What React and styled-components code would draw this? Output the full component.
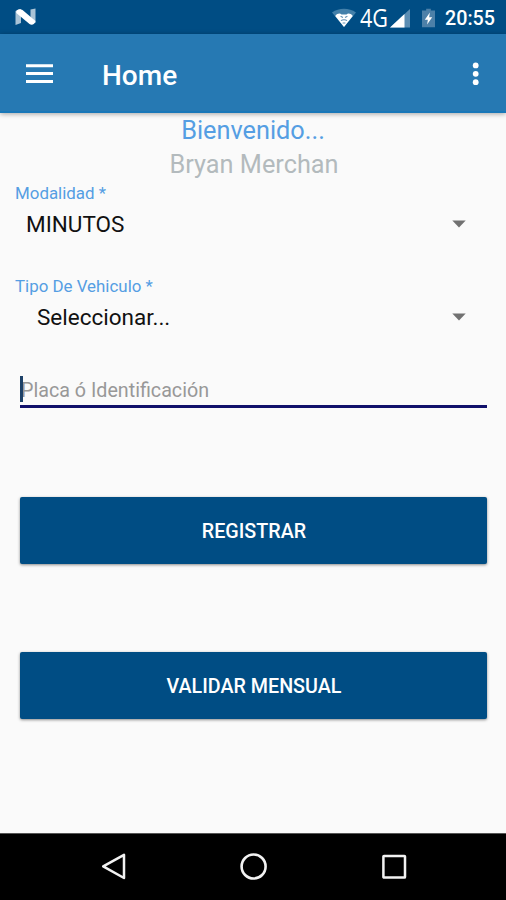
import React from "react"
import styled, { createGlobalStyle } from "styled-components"

const GlobalStyle = createGlobalStyle`
  * {
    box-sizing: border-box;
  }
  body {
    margin: 0;
    background: #fafafa;
    font-family: Roboto, "Noto Sans", sans-serif;
  }
  button {
    font-family: inherit;
  }
`

const StatusBar = () => (
  <Status>
    <svg width="22" height="18" viewBox="0 0 22 18">
      <path d="M0.5 3 L6 1 V15 L0.5 17 Z" fill="#a9c3d6" />
      <path d="M15.5 1.5 L20.5 0.5 V15 L15.5 12 Z" fill="#a9c3d6" />
      <path
        d="M1.3 3 C2.5 1 5.5 .5 7.5 2 L20.5 13 C20 16.5 16.5 17.5 14.5 16 L1.3 5 Z"
        fill="#fff"
      />
    </svg>
    <StatusIcons>
      <WifiIcon />
      <Network>4G</Network>
      <SignalIcon />
      <BatteryIcon />
      <Clock>20:55</Clock>
    </StatusIcons>
  </Status>
)

const WifiIcon = () => (
  <svg width="24" height="20" viewBox="0 0 24 20">
    <path d="M0 4.5 C7 -0.5 17 -0.5 24 4.5 L12 19 Z" fill="#4380aa" />
    <path
      d="M3.2 8 C5.5 5.2 8 5 9.5 6.5 H14.5 C16 5 18.5 5.2 20.8 8 L12 19 Z"
      fill="#fff"
    />
    <path
      d="M8.6 8.2 L11 9.4 M15.4 8.2 L13 9.4 M9 12.6 C10.5 11.4 13.5 11.4 15 12.6 M10.6 15 H13.4"
      stroke="#5f8fb3"
      strokeWidth="1.1"
      fill="none"
    />
  </svg>
)

const SignalIcon = () => (
  <svg width="20" height="19" viewBox="0 0 20 19">
    <path d="M0 18.5 L20 0 V18.5 Z" fill="#5b8db3" />
    <path d="M0 18.5 L14.5 5 V18.5 Z" fill="#fff" />
  </svg>
)

const BatteryIcon = () => (
  <Battery width="13" height="20" viewBox="0 0 14 20">
    <path d="M4.5 0 H9.5 V2 H14 V20 H0 V2 H4.5 Z" fill="#4d80a8" />
    <path d="M8.5 4 L3 12 H6.3 L5.5 17 L11 9.3 H7.7 Z" fill="#fff" />
  </Battery>
)

const Select = ({ label, value, indent }) => (
  <Field>
    <Label>{label}</Label>
    <Value $indent={indent}>
      {value}
      <svg width="14" height="8" viewBox="0 0 14 8">
        <path d="M0.3 0.5 H13.7 L7 7.5 Z" fill="#717171" />
      </svg>
    </Value>
  </Field>
)

const NavigationBar = () => (
  <Navigation>
    <svg width="26" height="28" viewBox="0 0 26 28">
      <path
        d="M23 2.8 V26 L2.2 14.4 Z"
        fill="none"
        stroke="#f2f2f2"
        strokeWidth="2.5"
        strokeLinejoin="round"
      />
    </svg>
    <svg width="28" height="28" viewBox="0 0 28 28">
      <circle
        cx="13.6"
        cy="14.5"
        r="12"
        fill="none"
        stroke="#f2f2f2"
        strokeWidth="2.6"
      />
    </svg>
    <svg width="26" height="28" viewBox="0 0 26 28">
      <rect
        x="2.4"
        y="4"
        width="21.6"
        height="21.6"
        rx="0.6"
        fill="none"
        stroke="#f2f2f2"
        strokeWidth="2.5"
      />
    </svg>
  </Navigation>
)

const App = () => (
  <Screen>
    <GlobalStyle />
    <StatusBar />
    <Toolbar>
      <svg width="27" height="20" viewBox="0 0 27 20">
        <path d="M0 1.8 H27 M0 9.6 H27 M0 17.4 H27" stroke="#fff" strokeWidth="3" />
      </svg>
      <Title>Home</Title>
      <svg width="8" height="24" viewBox="0 0 8 24">
        <circle cx="3.7" cy="3.4" r="2.9" fill="#fff" />
        <circle cx="3.7" cy="11.8" r="2.9" fill="#fff" />
        <circle cx="3.7" cy="20.2" r="2.9" fill="#fff" />
      </svg>
    </Toolbar>
    <Content>
      <Greeting color="#559ee3">Bienvenido...</Greeting>
      <Greeting color="#b3babd" $shift={1}>
        Bryan Merchan
      </Greeting>
      <Select label="Modalidad *" value="MINUTOS" indent={26} />
      <Select label="Tipo De Vehiculo *" value="Seleccionar..." indent={37} />
      <PlateInput>
        <Caret />
        Placa ó Identificación
      </PlateInput>
      <Button>REGISTRAR</Button>
      <Button>VALIDAR MENSUAL</Button>
    </Content>
    <NavigationBar />
  </Screen>
)

export default App

const Screen = styled.div`
  display: flex;
  flex-direction: column;
  width: 506px;
  height: 900px;
  overflow: hidden;
  background: #fafafa;
`

const Status = styled.div`
  display: flex;
  align-items: center;
  justify-content: space-between;
  height: 34px;
  padding: 0 11px 0 15px;
  background: #004d84;
  color: #fff;
`

const StatusIcons = styled.div`
  display: flex;
  align-items: center;
  height: 34px;
  padding-top: 2px;
`

const Network = styled.span`
  width: 27px;
  margin: -2px 3px 0 4px;
  font-family: "Open Sans", sans-serif;
  font-size: 26px;
  line-height: 34px;
  transform: scaleX(0.83);
  transform-origin: left;
`

const Battery = styled.svg`
  margin-left: 12px;
`

const Clock = styled.span`
  margin-left: 10px;
  padding-top: 2px;
  font-size: 19.7px;
  font-weight: 500;
  line-height: 34px;
`

const Toolbar = styled.header`
  display: flex;
  align-items: center;
  flex: none;
  height: 79px;
  padding: 2px 26px 0 26px;
  background: #2679b3;
  border-bottom: 2px solid #1877b8;
  box-shadow: 0 1px 5px rgba(0, 0, 0, 0.35);
  z-index: 1;
`

const Title = styled.h1`
  flex: 1;
  margin: 4px 0 0 49px;
  color: #fff;
  font-size: 28px;
  font-weight: 500;
`

const Content = styled.main`
  flex: 1;
  display: flex;
  flex-direction: column;
  padding-top: 1px;
`

const Greeting = styled.p`
  margin: 0;
  padding-left: ${(props) => (props.$shift || 0) * 2}px;
  color: ${(props) => props.color};
  font-size: 25.3px;
  line-height: 34px;
  text-align: center;
`

const Field = styled.div`
  display: flex;
  flex-direction: column;
  height: 93px;
`

const Label = styled.label`
  padding-left: 15px;
  color: #559ee3;
  font-size: 16.9px;
  line-height: 22px;
`

const Value = styled.div`
  display: flex;
  align-items: center;
  justify-content: space-between;
  padding: 0 40px 0 ${(props) => props.$indent}px;
  color: #111;
  font-size: 22.5px;
  line-height: 40px;
`

const PlateInput = styled.div`
  position: relative;
  height: 33px;
  margin: 7px 19px 0 20px;
  padding-left: 1px;
  border-bottom: 3px solid #11116b;
  color: #989898;
  font-size: 19.7px;
  line-height: 32px;
`

const Caret = styled.span`
  position: absolute;
  left: 0;
  top: 1px;
  width: 3px;
  height: 26px;
  background: #1d4168;
`

const Button = styled.button`
  flex: none;
  height: 67px;
  margin: 89px 19px 0 20px;
  padding: 2px 0 0 1px;
  border: none;
  border-radius: 2px;
  background: #004d84;
  box-shadow: 0 1px 3px rgba(0, 0, 0, 0.45);
  color: #fff;
  font-size: 19.7px;
  font-weight: 500;

  & + & {
    margin-top: 88px;
  }
`

const Navigation = styled.nav`
  display: flex;
  align-items: center;
  justify-content: space-between;
  flex: none;
  height: 67px;
  padding: 0 99px 2px 101px;
  background: #000;
  border-top: 1px solid #555;
`
